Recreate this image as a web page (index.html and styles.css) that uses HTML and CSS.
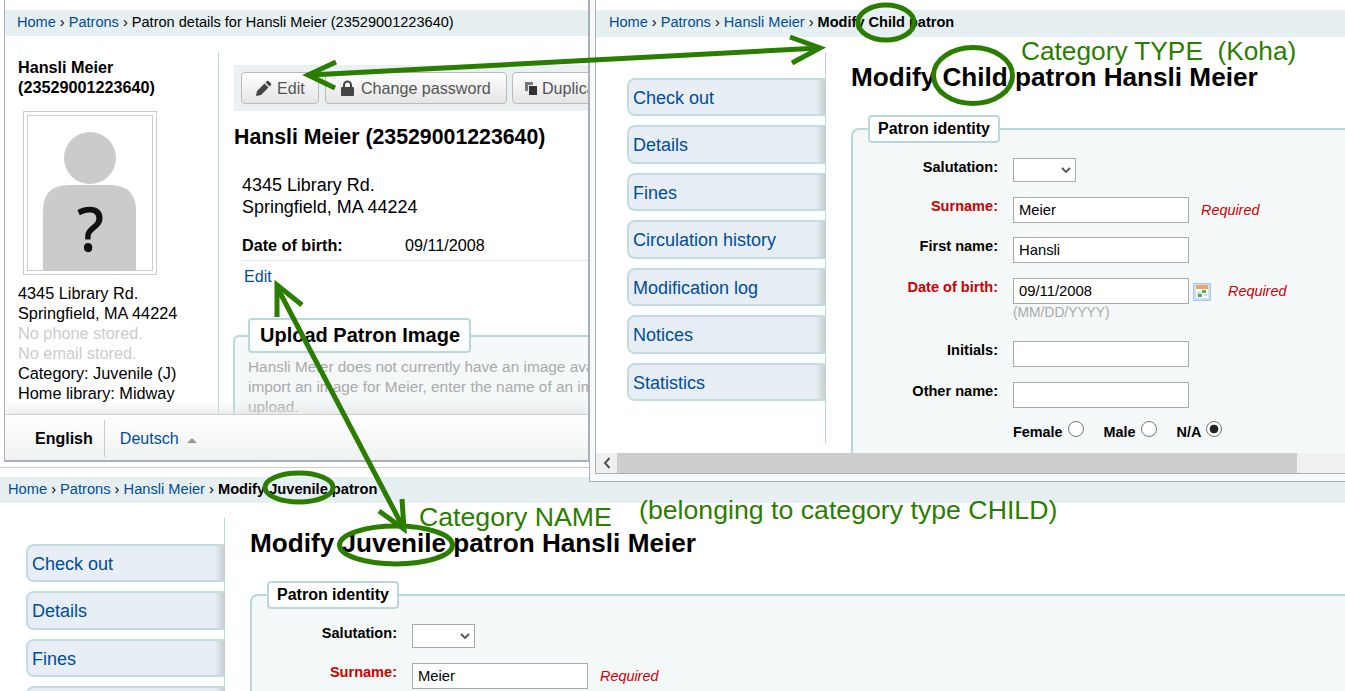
FILE: index.html
```html
<!DOCTYPE html>
<html lang="en">
<head>
<meta charset="utf-8">
<title>Patron category type and name</title>
<link rel="stylesheet" href="styles.css">
</head>
<body>
<div class="desktop">

  <section class="window win-detail">
    <nav class="crumbs"><a href="#">Home</a> › <a href="#">Patrons</a> › Patron details for Hansli Meier (23529001223640)</nav>
    <div class="detail-main">
      <aside class="patron-side">
        <h5 class="side-name">Hansli Meier<br>(23529001223640)</h5>
        <div class="photo">
          <div class="photo-inner">
            <svg class="avatar" width="124" height="154" viewBox="0 0 124 154">
              <circle cx="62" cy="42" r="26" fill="#cbcbcb"/>
              <path d="M15 154V95q0-26 26-26h41q26 0 26 26v59z" fill="#cbcbcb"/>
              <text x="62.500" y="135" text-anchor="middle" class="avatar-q">?</text>
            </svg>
          </div>
        </div>
        <ul class="side-info">
          <li>4345 Library Rd.</li>
          <li>Springfield, MA 44224</li>
          <li class="muted">No phone stored.</li>
          <li class="muted">No email stored.</li>
          <li>Category: Juvenile (J)</li>
          <li>Home library: Midway</li>
        </ul>
      </aside>
      <div class="detail-body">
        <div class="toolbar">
          <a class="btn btn-edit" href="#">
            <svg width="17" height="17" viewBox="0 0 17 17"><path d="M1 16l1-5 7.500-7.500 4 4L6 15zM10.500 2.500l1.500-1.500q.7-.6 1.400 0l2.600 2.600q.6.7 0 1.400l-1.500 1.500z" fill="#444"/></svg>Edit</a>
          <a class="btn btn-pass" href="#">
            <svg width="15" height="17" viewBox="0 0 15 17"><path d="M3 8V5a4.500 4.500 0 0 1 9 0v3h-2V5a2.500 2.500 0 0 0-5 0v3z" fill="#444"/><rect x="1" y="7" width="13" height="9" rx="1" fill="#444"/></svg>Change password</a>
          <a class="btn btn-dup" href="#">
            <svg width="12" height="13" viewBox="0 0 12 13"><path d="M0 0h8v3H3v6H0z" fill="#777"/><rect x="4" y="4" width="8" height="9" fill="#333"/></svg>Duplicate</a>
        </div>
        <h2 class="detail-title">Hansli Meier (23529001223640)</h2>
        <p class="address">4345 Library Rd.<br>Springfield, MA 44224</p>
        <div class="dob-row"><b class="dob-label">Date of birth:</b><span>09/11/2008</span></div>
        <a class="edit-link" href="#">Edit</a>
        <fieldset class="upload">
          <legend>Upload Patron Image</legend>
          <p>Hansli Meier does not currently have an image available. To<br>import an image for Meier, enter the name of an image file to<br>upload.</p>
        </fieldset>
      </div>
    </div>
    <footer class="lang-bar">
      <b class="lang-current">English</b>
      <a class="lang-other" href="#">Deutsch</a>
      <span class="lang-caret"></span>
    </footer>
  </section>

  <section class="window win-name">
    <nav class="crumbs"><a href="#">Home</a> › <a href="#">Patrons</a> › <a href="#">Hansli Meier</a> › <b>Modify Juvenile patron</b></nav>
    <div class="edit-main">
      <aside class="menu-side">
        <ul class="menu">
          <li><a href="#">Check out</a></li>
          <li><a href="#">Details</a></li>
          <li><a href="#">Fines</a></li>
          <li><a href="#">Circulation history</a></li>
        </ul>
      </aside>
      <div class="edit-body">
        <h1>Modify Juvenile patron Hansli Meier</h1>
        <fieldset class="identity">
          <legend>Patron identity</legend>
          <div class="row row-sal"><label>Salutation:</label><select><option></option></select></div>
          <div class="row"><label class="req">Surname:</label><input class="text" value="Meier"><em class="required">Required</em></div>
        </fieldset>
      </div>
    </div>
  </section>

  <div class="window-shell">
    <section class="window win-type">
      <div class="type-page">
        <nav class="crumbs"><a href="#">Home</a> › <a href="#">Patrons</a> › <a href="#">Hansli Meier</a> › <b>Modify Child patron</b></nav>
        <div class="edit-main">
          <aside class="menu-side">
            <ul class="menu">
              <li><a href="#">Check out</a></li>
              <li><a href="#">Details</a></li>
              <li><a href="#">Fines</a></li>
              <li><a href="#">Circulation history</a></li>
              <li><a href="#">Modification log</a></li>
              <li><a href="#">Notices</a></li>
              <li><a href="#">Statistics</a></li>
            </ul>
          </aside>
          <div class="edit-body">
            <h1>Modify Child patron Hansli Meier</h1>
            <fieldset class="identity">
              <legend>Patron identity</legend>
              <div class="row row-sal"><label>Salutation:</label><select><option></option></select></div>
              <div class="row"><label class="req">Surname:</label><input class="text" value="Meier"><em class="required">Required</em></div>
              <div class="row row-first"><label>First name:</label><input class="text" value="Hansli"></div>
              <div class="row row-date">
                <label class="req">Date of birth:</label>
                <input class="text" value="09/11/2008">
                <svg class="cal" width="18" height="18" viewBox="0 0 18 18">
                  <rect x=".5" y=".5" width="17" height="17" fill="#cfe0f2" stroke="#a9c6e6"/>
                  <rect x="3" y="2" width="12" height="4" fill="#f2a35c"/>
                  <rect x="3" y="6" width="12" height="9" fill="#fff"/>
                  <rect x="4" y="9" width="4" height="2" fill="#bcd6ea"/>
                  <rect x="9" y="7" width="4" height="3" fill="#5cab5c"/>
                  <rect x="5" y="11" width="4" height="3" fill="#5cab5c"/>
                  <rect x="11" y="11" width="3" height="2" fill="#bcd6ea"/>
                </svg>
                <em class="required required-date">Required</em>
              </div>
              <div class="hint">(MM/DD/YYYY)</div>
              <div class="row row-initials"><label>Initials:</label><input class="text"></div>
              <div class="row"><label>Other name:</label><input class="text"></div>
              <div class="gender">
                <label>Female<input type="radio" name="g"></label>
                <label>Male<input type="radio" name="g"></label>
                <label>N/A<input type="radio" name="g" checked></label>
              </div>
            </fieldset>
          </div>
        </div>
      </div>
      <div class="hscroll">
        <span class="hscroll-btn"><svg width="8" height="12" viewBox="0 0 8 12"><path d="M6.500 1L2 6l4.500 5" fill="none" stroke="#555" stroke-width="2"/></svg></span>
        <span class="hscroll-thumb"></span>
      </div>
    </section>
  </div>

  <svg class="marks" width="1345" height="691" viewBox="0 0 1345 691">
    <g fill="none" stroke="#2b7d00" stroke-width="5">
      <path d="M310 75L820 48"/>
      <path d="M336 62L308 75L335 88"/>
      <path d="M790 37L820 48L792 63"/>
      <path d="M277 287L404 529"/>
      <path d="M277 317V285L302 305"/>
      <path d="M379 511L404 529L402 499"/>
      <ellipse cx="886" cy="22.500" rx="28" ry="17.500"/>
      <ellipse cx="973" cy="75.500" rx="39.500" ry="28"/>
      <ellipse cx="299" cy="487.500" rx="34" ry="14.500"/>
      <ellipse cx="396" cy="545" rx="56.500" ry="19"/>
    </g>
  </svg>
  <span class="note note-type">Category TYPE &nbsp;(Koha)</span>
  <span class="note note-name">Category NAME</span>
  <span class="note note-belong">(belonging to category type CHILD)</span>
</div>
</body>
</html>
```
FILE: styles.css
```css
* { box-sizing: border-box; }
html, body { margin: 0; padding: 0; background: #fff; }
body { font-family: "Liberation Sans", Arial, sans-serif; color: #000; font-size: 14.6px; }
a { color: #004d99; text-decoration: none; }
ul { list-style: none; margin: 0; padding: 0; }
h1, h2, h5, p { margin: 0; }

.desktop { position: relative; width: 1345px; height: 691px; overflow: hidden; background: #fff; }
.window { position: absolute; overflow: hidden; background: #fff; }

.crumbs { height: 26px; line-height: 24px; background: #e6f0f2; white-space: nowrap; font-size: 14.55px; }

/* Patron details window */
.win-detail { left: 4px; top: 0; width: 585px; height: 462px; padding-top: 10px; display: flex; flex-direction: column; border: 1px solid #a9b1b8; border-width: 0 1px 2px 1px; }
.win-detail .crumbs { padding-left: 12px; flex: none; }
.detail-main { flex: 1; display: flex; min-height: 0; padding-top: 16px; overflow: hidden; }
.patron-side { width: 214px; flex: none; border-right: 1px solid #b9d8d9; padding: 5px 0 0 13px; }
.side-name { font-size: 16.2px; line-height: 20px; font-weight: bold; white-space: nowrap; }
.photo { width: 134px; height: 164px; margin: 14px 0 0 5px; border: 1px solid #ccc; padding: 3px; }
.photo-inner { width: 126px; height: 156px; border: 1px solid #ccc; overflow: hidden; }
.avatar { display: block; }
.avatar-q { font: 60px "Open Sans", "Liberation Sans", sans-serif; fill: #111; stroke: #111; stroke-width: 1.500px; }
.side-info { margin-top: 8px; line-height: 20px; white-space: nowrap; font-size: 16.3px; }
.muted { color: #ccc; }

.detail-body { flex: 1; min-width: 0; padding: 14px 0 0 15px; overflow: hidden; }
.toolbar { height: 46px; background: #e9f1f3; display: flex; align-items: center; gap: 6px; padding: 0 0 0 7px; margin-top: -1px; white-space: nowrap; }
.btn { height: 32px; padding-top: 1px; display: flex; align-items: center; gap: 5px; flex: none; color: #555; font-size: 16.1px; background: linear-gradient(#fff, #e4e4e4); border: 1px solid #bbb; border-radius: 4px; padding-left: 13px; }
.btn-edit { width: 78px; }
.btn-pass { width: 182px; padding-left: 14px; gap: 6px; }
.btn-dup { width: 120px; padding-left: 12px; gap: 5px; margin-left: -1px; }
.detail-title { font-size: 21.300px; line-height: 24px; margin-top: 14px; white-space: nowrap; }
.address { font-size: 17.950px; line-height: 22px; margin: 25px 0 0 8px; white-space: nowrap; }
.dob-row { display: flex; margin: 16px 0 0 8px; height: 27px; line-height: 22px; font-size: 16.2px; border-bottom: 1px solid #e6e6e6; white-space: nowrap; }
.dob-label { width: 163px; }
.edit-link { display: block; margin: 5px 0 0 10px; font-size: 16.100px; line-height: 20px; }
.upload { margin: 32px 0 0 -1px; padding: 4px 13px 0; width: 500px; border: 2px solid #b9d8d9; border-radius: 6px; background: #f4f8f9; white-space: nowrap; height: 140px; min-width: 0; }
.upload legend { font-size: 20px; font-weight: bold; background: #fff; border: 2px solid #b9d8d9; border-radius: 4px; padding: 0 9px 0 10px; margin-left: 0; height: 35px; line-height: 31px; }
.upload p { color: #aaa; font-size: 15.400px; line-height: 20px; }

.lang-bar { flex: none; height: 46px; padding-top: 1px; display: flex; align-items: center; background: linear-gradient(#fff, #f0f2f2); border-top: 1px solid #ccc; box-shadow: 0 -6px 8px rgba(225,225,225,.6); font-size: 16px; position: relative; padding-left: 30px; }
.lang-current { padding-right: 11px; line-height: 37px; border-right: 1px solid #ccc; }
.lang-other { margin: 1px 0 0 15px; font-size: 16.100px; }
.lang-caret { margin-left: 8px; margin-top: 4px; border: 5px solid transparent; border-top: 0; border-bottom: 5px solid #999; }

/* Shared edit page */
.win-name { left: 0; top: 467px; width: 1345px; height: 224px; padding-top: 10px; }
.win-name::before { content: ""; position: absolute; left: 0; right: 0; top: 0; border-top: 1px solid #ccc; }
.win-name .crumbs { padding-left: 8px; font-size: 14.65px; }
.edit-main { display: flex; padding-top: 15px; }
.menu-side { width: 225px; flex: none; padding: 25.900px 0 0 26px; margin-bottom: 10px; border-right: 1px solid #b9d8d9; }
.menu { margin-right: -1px; }
.menu li { height: 38.500px; margin-bottom: 9px; }
.menu a { display: block; height: 100%; font-size: 18px; line-height: 36px; padding-left: 4px; border: 2px solid #c3dcdf; border-right: 0; border-radius: 8px 0 0 8px; background: linear-gradient(to right, #e7eef5 0, #e7eef5 calc(100% - 10px), #c4cbcc 100%); white-space: nowrap; }
.edit-body { flex: 1; min-width: 0; padding-left: 25px; }
.edit-body h1 { font-size: 26.150px; line-height: 30px; margin-top: 10px; white-space: nowrap; }
.identity { margin: 23px 0 0; padding: 15px 0 0 0; border: 2px solid #b9d8d9; border-right: 0; border-radius: 8px 0 0 0; background: #f4f8f9; min-width: 0; height: 500px; }
.identity legend { margin-left: 15px; padding: 0 8px; height: 28px; line-height: 24px; font-size: 16px; font-weight: bold; background: #fff; border: 2px solid #b9d8d9; border-radius: 4px; }
.row { display: flex; align-items: flex-start; height: 26px; margin-bottom: 14px; white-space: nowrap; }
.row > label { width: 145px; flex: none; text-align: right; font-weight: bold; font-size: 14.55px; line-height: 20px; margin-right: 15px; margin-top: -1px; }
.row > label.req { color: #c00; }
.row-sal { height: 24px; margin-top: 0; margin-bottom: 15px; }
.row-sal > label { margin-top: -1px; }
.row-first { margin-bottom: 15px; }
.row-initials { margin-bottom: 15px; }
select { appearance: none; width: 63px; height: 24px; background: #fff url("data:image/svg+xml,%3Csvg xmlns='http://www.w3.org/2000/svg' width='10' height='7'%3E%3Cpath d='M1 1l4 4 4-4' fill='none' stroke='%23555' stroke-width='1.800'/%3E%3C/svg%3E") no-repeat right 4px center; border: 1px solid #aaa; border-radius: 0; font: 14.6px "Liberation Sans", sans-serif; padding: 0; }
.text { width: 176px; height: 26px; border: 1px solid #aaa; background: #fff; padding: 0 5px; font: 14.8px "Liberation Sans", sans-serif; color: #000; }
.required { color: #c00; font-size: 14.4px; line-height: 26px; margin-left: 12px; }
.required-date { margin-left: 17px; }
.cal { margin: 5px 0 0 4px; flex: none; }
.row-date { margin-bottom: 0; }
.hint { margin-left: 160px; color: #aaa; font-size: 13.800px; line-height: 18px; height: 37px; }
.gender { display: flex; gap: 20px; margin-left: 160px; font-size: 14.4px; font-weight: bold; margin-top: 2px; }
.gender label { display: flex; align-items: flex-start; gap: 5px; line-height: 20px; }
.gender input { appearance: none; width: 16px; height: 16px; margin: -1px 0 0; border: 1px solid #777; border-radius: 50%; background: #fff; }
.gender input:checked { background: radial-gradient(circle, #222 0, #222 4px, #fff 4.700px); }

/* Child window with its scrollbar */
.window-shell { position: absolute; left: 589px; top: 0; width: 756px; height: 482px; background: #f6f8f9; border-left: 1px solid #a9b1b8; border-bottom: 1px solid #a9b1b8; padding: 0 0 7px 5px; }
.win-type { position: relative; width: 100%; height: 100%; display: flex; flex-direction: column; border-left: 1px solid #a9b1b8; border-bottom: 1px solid #a9b1b8; }
.type-page { flex: 1; min-height: 0; padding-top: 10px; overflow: hidden; }
.win-type .crumbs { padding-left: 13px; height: 27px; }
.win-type .edit-main { padding-top: 15px; height: 416px; }
.win-type .menu-side { width: 230px; padding-left: 31px; }
.hscroll { flex: none; height: 20px; display: flex; background: #f0f0f0; }
.hscroll-btn { width: 21px; display: flex; align-items: center; justify-content: center; }
.hscroll-thumb { width: 680px; background: #cdcdcd; }

/* Annotations over everything */
.marks { position: absolute; left: 0; top: 0; pointer-events: none; }
.note { position: absolute; color: #2b7d00; white-space: nowrap; font-size: 26.700px; line-height: 32px; }
.note-type { left: 1021px; top: 35px; font-size: 26.250px; }
.note-name { left: 419px; top: 501px; }
.note-belong { left: 639px; top: 494px; }
```
